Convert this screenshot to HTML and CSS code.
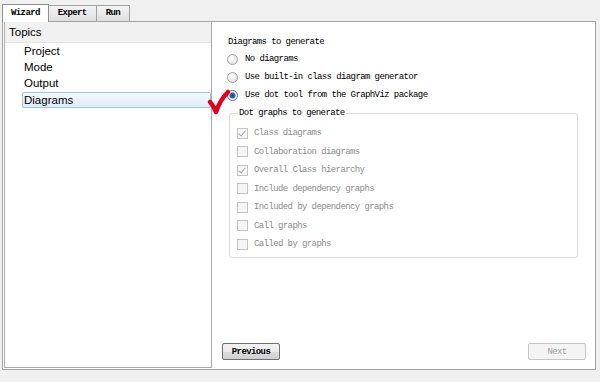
FILE: index.html
```html
<!DOCTYPE html>
<html lang="en">
<head>
    <meta charset="UTF-8">
    <title>Doxywizard</title>
    <link rel="stylesheet" href="styles.css">
</head>
<body>
    <div class="tabs">
        <div class="tab active">Wizard</div>
        <div class="tab">Expert</div>
        <div class="tab">Run</div>
    </div>
    <div class="pane">
        <div class="topics">
            <div class="topics-head">Topics</div>
            <ul class="topic-list">
                <li>Project</li>
                <li>Mode</li>
                <li>Output</li>
                <li class="selected">Diagrams</li>
            </ul>
        </div>
        <div class="page">
            <div class="options">
                <div class="caption">Diagrams to generate</div>
                <div class="row"><span class="radio"></span>No diagrams</div>
                <div class="row"><span class="radio"></span>Use built-in class diagram generator</div>
                <div class="row"><span class="radio on"></span>Use dot tool from the GraphViz package</div>

                <fieldset class="group">
                    <legend>Dot graphs to generate</legend>
                    <div class="row off"><span class="check on"></span>Class diagrams</div>
                    <div class="row off"><span class="check"></span>Collaboration diagrams</div>
                    <div class="row off"><span class="check on"></span>Overall Class hierarchy</div>
                    <div class="row off"><span class="check"></span>Include dependency graphs</div>
                    <div class="row off"><span class="check"></span>Included by dependency graphs</div>
                    <div class="row off"><span class="check"></span>Call graphs</div>
                    <div class="row off"><span class="check"></span>Called by graphs</div>
                </fieldset>
            </div>
            <div class="buttons">
                <button class="btn">Previous</button>
                <button class="btn" disabled>Next</button>
            </div>
        </div>
    </div>

    <!-- red tick drawn over the screenshot -->
    <svg class="tick" width="26" height="30" viewBox="0 0 26 30">
        <path d="M4 15 Q7 18 10 25 Q14 13 22 5" fill="none" stroke="#e0001a" stroke-width="4.5" stroke-linecap="round" stroke-linejoin="round"/>
    </svg>
</body>
</html>
```

FILE: styles.css
```css
body {
    margin: 0;
    width: 600px;
    height: 382px;
    background: #f0f0f0;
    font-family: "Liberation Mono", monospace;
    font-size: 9px;
    letter-spacing: -0.6px;
    color: #000;
    position: relative;
    overflow: hidden;
}
.tabs {
    display: flex;
    align-items: flex-end;
    height: 21px;
    padding-left: 2px;
}
.tab {
    height: 15px;
    line-height: 15px;
    padding: 0 9px;
    border: 1px solid #a0a0a0;
    border-bottom: none;
    background: linear-gradient(#f4f4f4, #dedede);
    font-weight: bold;
    margin-right: -1px;
}
.tab.active {
    height: 17px;
    line-height: 17px;
    background: #fff;
    border-color: #8e8f8f;
    position: relative;
    z-index: 1;
    margin-bottom: -1px;
    padding: 0 8px;
}
.pane {
    display: flex;
    height: 347px;
    margin: 0 4px 0 2px;
    border: 1px solid #a3a3a3;
    background: #fff;
}
.topics {
    width: 206px;
    margin: 0 0 1px 1px;
    border: 1px solid #aaa;
    border-top: none;
    font-family: "Liberation Sans", sans-serif;
    font-size: 11.5px;
    letter-spacing: 0;
}
.topics-head {
    height: 20px;
    line-height: 20px;
    padding-left: 4px;
    background: #f1f1f1;
    border-bottom: 1px solid #e2e2e2;
}
.topic-list {
    list-style: none;
    margin: 0;
    padding: 0;
}
.topic-list li {
    height: 16px;
    line-height: 16px;
    padding-left: 19px;
}
.topic-list li.selected {
    margin-top: 1px;
    margin-left: 17px;
    padding-left: 1px;
    height: 14px;
    line-height: 14px;
    border: 1px solid #9fc4e8;
    border-radius: 2px;
    background: linear-gradient(#f3f8fd, #dfecfb);
}
.page {
    flex: 1;
    display: flex;
    flex-direction: column;
    justify-content: space-between;
}
.options {
    padding: 14px 15px 0 15px;
}
.caption {
    height: 12px;
    line-height: 12px;
    margin-bottom: 2px;
    padding-left: 1px;
}
.row {
    display: flex;
    align-items: center;
    height: 18px;
}
.row.off {
    height: 18.5px;
    color: #8d8d8d;
}
.radio {
    width: 9px;
    height: 9px;
    border: 1px solid #a6a6a6;
    border-radius: 50%;
    background: radial-gradient(circle at 40% 40%, #fff, #d8d8d8);
    margin-right: 7px;
    box-sizing: content-box;
}
.radio.on {
    border-color: #6b7f96;
    background: radial-gradient(circle, #1d4e7e 0, #2c6cab 2.5px, #e6eef6 3.5px, #f4f4f4 5px);
}
.group {
    margin: 4px 0 0 2px;
    padding: 6px 0 3px 7px;
    width: 340px;
    border: 1px solid #dcdcdc;
    border-radius: 3px;
}
.group legend {
    padding: 0 1px 0 1px;
    margin-left: 1px;
    line-height: 10px;
}
.check {
    width: 9px;
    height: 9px;
    border: 1px solid #c4c4c4;
    background: #f5f5f5;
    margin-right: 6px;
    position: relative;
}
.check.on::after {
    content: "";
    position: absolute;
    left: 2px;
    top: 0;
    width: 3px;
    height: 6px;
    border: solid #a8a8a8;
    border-width: 0 1px 1px 0;
    transform: rotate(40deg);
}
.buttons {
    display: flex;
    justify-content: space-between;
    padding: 0 9px 9px 10px;
}
.btn {
    width: 58px;
    height: 17px;
    padding: 0;
    font-family: "Liberation Mono", monospace;
    font-size: 9px;
    letter-spacing: -0.6px;
    font-weight: bold;
    color: #000;
    border: 1px solid #707070;
    border-radius: 2px;
    background: linear-gradient(#f2f2f2 0, #ebebeb 50%, #dddddd 50%, #cfcfcf 100%);
}
.btn:disabled {
    font-weight: normal;
    color: #a0a0a0;
    border-color: #c6c6c6;
    background: #f4f4f4;
}
.tick {
    position: absolute;
    left: 206px;
    top: 87px;
}
```
